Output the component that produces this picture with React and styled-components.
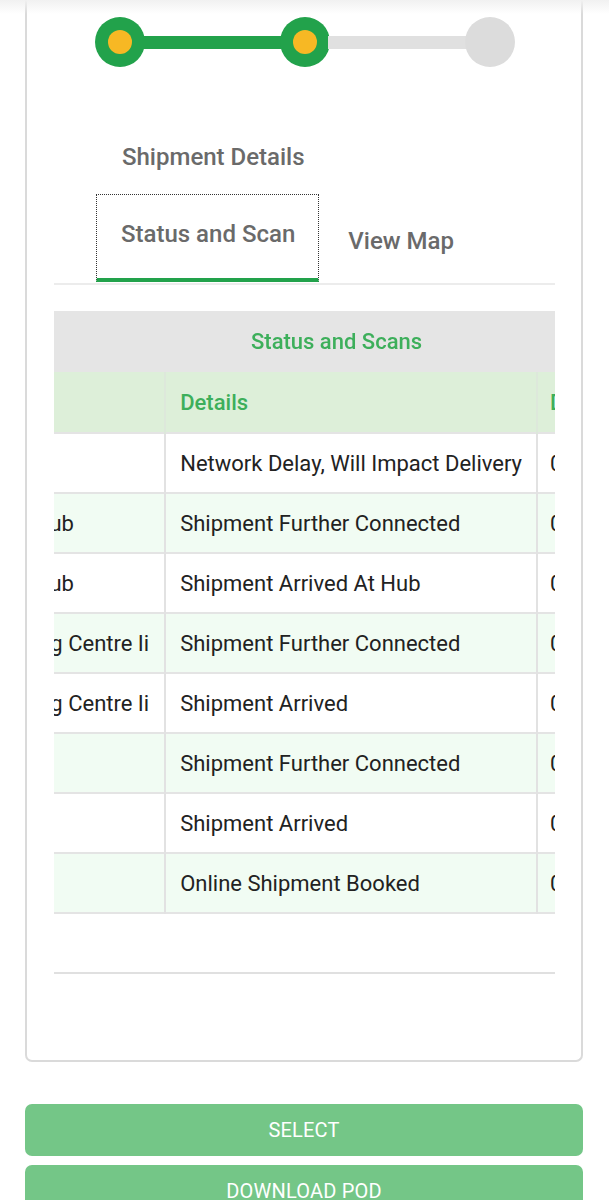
import React, { useLayoutEffect, useRef } from "react";
import styled, { createGlobalStyle } from "styled-components";

const GlobalStyle = createGlobalStyle`
  body {
    margin: 0;
    background: #fff;
    font-family: Roboto, "Noto Sans", "Liberation Sans", sans-serif;
  }
`;

const rows = [
  { place: "Thane", details: "Network Delay, Will Impact Delivery", date: "06 Mar 2023" },
  { place: "Bhiwandi Rail Hub", details: "Shipment Further Connected", date: "05 Mar 2023" },
  { place: "Bhiwandi Rail Hub", details: "Shipment Arrived At Hub", date: "05 Mar 2023" },
  { place: "Bhiwandi Sorting Centre Ii", details: "Shipment Further Connected", date: "04 Mar 2023" },
  { place: "Bhiwandi Sorting Centre Ii", details: "Shipment Arrived", date: "04 Mar 2023" },
  { place: "Pune", details: "Shipment Further Connected", date: "03 Mar 2023" },
  { place: "Pune", details: "Shipment Arrived", date: "03 Mar 2023" },
  { place: "Pune", details: "Online Shipment Booked", date: "03 Mar 2023" },
];

const Page = styled.div`
  position: relative;
  padding: 0 26px 0 25px;
  &::before {
    content: "";
    position: absolute;
    left: 0;
    right: 0;
    top: 0;
    height: 14px;
    background: linear-gradient(#f1f1f1, rgba(255, 255, 255, 0));
  }
`;

const Card = styled.div`
  border: 2px solid #dadada;
  border-top: none;
  border-radius: 0 0 7px 7px;
  padding: 17px 26px 86px 27px;
  background: #fff;
`;

const Stepper = styled.div`
  display: flex;
  align-items: center;
  margin-left: 41px;
  width: 420px;
`;

const Dot = styled.div`
  width: 50px;
  height: 50px;
  border-radius: 50%;
  flex: none;
  background: ${(p) => (p.$done ? "#22a24b" : "#dcdcdc")};
  display: flex;
  align-items: center;
  justify-content: center;
  &::after {
    content: "";
    width: 24px;
    height: 24px;
    border-radius: 50%;
    background: ${(p) => (p.$done ? "#f7b824" : "transparent")};
  }
`;

const Line = styled.div`
  flex: 1;
  height: 13px;
  margin: 0 -2px;
  background: ${(p) => (p.$done ? "#22a24b" : "#e0e0e0")};
`;

const TabList = styled.div`
  display: flex;
  flex-wrap: wrap;
  align-items: flex-start;
  margin: 51px 0 0 44px;
`;

const Tab = styled.div`
  box-sizing: border-box;
  font-size: 24px;
  font-weight: 500;
  line-height: 26px;
  color: #6a6a6a;
  white-space: nowrap;
  border: 1px dotted ${(p) => (p.$active ? "#333" : "transparent")};
  border-bottom: 4px solid ${(p) => (p.$active ? "#22a24b" : "transparent")};
  padding: ${(p) =>
    p.$full ? "25px 24px 20px 23px" : p.$drop ? "33px 24px 24px 28px" : "26px 23px 31px 24px"};
  margin-left: ${(p) => (p.$active ? "-2px" : "0")};
  flex-basis: ${(p) => (p.$full ? "100%" : "auto")};
`;

const Divider = styled.div`
  height: 2px;
  margin-top: 1px;
  background: #ececec;
`;

const TableScroll = styled.div`
  margin-top: 26px;
  overflow: hidden;
`;

const Table = styled.table`
  border-collapse: collapse;
  font-size: 22px;
  white-space: nowrap;
`;

const Caption = styled.th`
  background: #e5e5e5;
  color: #3daf5b;
  font-weight: 500;
  font-size: 22px;
  height: 61px;
  padding: 0;
  text-align: left;
`;

const CaptionText = styled.span`
  display: inline-block;
  position: sticky;
  left: 197px;
`;

const HeadCell = styled.th`
  background: #ddefd9;
  color: #3daf5b;
  font-weight: 500;
  text-align: left;
  height: 60px;
  padding: 0 14px;
  border-left: 2px solid #dde8db;
  &:first-child {
    border-left: none;
    padding: 0 15px;
  }
  &:last-child {
    padding-left: 12px;
  }
`;

const Row = styled.tr`
  background: ${(p) => (p.$alt ? "#f1fcf3" : "#fff")};
`;

const Cell = styled.td`
  height: 58px;
  padding: 0 14px;
  color: #222;
  border-top: 2px solid #e4e4e4;
  border-left: 2px solid #e2e2e2;
  &:first-child {
    border-left: none;
    padding: 0 15px;
  }
  &:last-child {
    padding-left: 12px;
  }
`;

const TableEnd = styled.tr`
  td {
    border-top: 2px solid #e4e4e4;
    padding: 0;
  }
`;

const Scrollbar = styled.div`
  margin-top: 58px;
  height: 2px;
  background: #e0e0e0;
`;

const Actions = styled.div`
  display: flex;
  flex-direction: column;
  gap: 9px;
  margin-top: 42px;
`;

const Button = styled.button`
  height: 52px;
  border: none;
  border-radius: 7px;
  background: #74c687;
  color: #fff;
  font-family: Roboto, "Noto Sans", "Liberation Sans", sans-serif;
  font-size: 20px;
  font-weight: 400;
  letter-spacing: 0.2px;
`;

export default function App() {
  const scrollRef = useRef(null);
  const firstCol = useRef(null);

  useLayoutEffect(() => {
    if (scrollRef.current && firstCol.current) {
      scrollRef.current.scrollLeft = firstCol.current.offsetWidth - 111;
    }
  }, []);

  return (
    <>
      <GlobalStyle />
      <Page>
        <Card>
          <Stepper>
            <Dot $done />
            <Line $done />
            <Dot $done />
            <Line />
            <Dot />
          </Stepper>

          <TabList>
            <Tab $full>Shipment Details</Tab>
            <Tab $active>Status and Scan</Tab>
            <Tab $drop>View Map</Tab>
          </TabList>
          <Divider />

          <TableScroll ref={scrollRef}>
            <Table>
              <thead>
                <tr>
                  <Caption colSpan={3}>
                    <CaptionText>Status and Scans</CaptionText>
                  </Caption>
                </tr>
                <tr>
                  <HeadCell ref={firstCol}>Location</HeadCell>
                  <HeadCell>Details</HeadCell>
                  <HeadCell>Date</HeadCell>
                </tr>
              </thead>
              <tbody>
                {rows.map((r, i) => (
                  <Row key={i} $alt={i % 2 === 1}>
                    <Cell>{r.place}</Cell>
                    <Cell>{r.details}</Cell>
                    <Cell>{r.date}</Cell>
                  </Row>
                ))}
                <TableEnd>
                  <td colSpan={3} />
                </TableEnd>
              </tbody>
            </Table>
          </TableScroll>
          <Scrollbar />
        </Card>

        <Actions>
          <Button>SELECT</Button>
          <Button>DOWNLOAD POD</Button>
        </Actions>
      </Page>
    </>
  );
}
